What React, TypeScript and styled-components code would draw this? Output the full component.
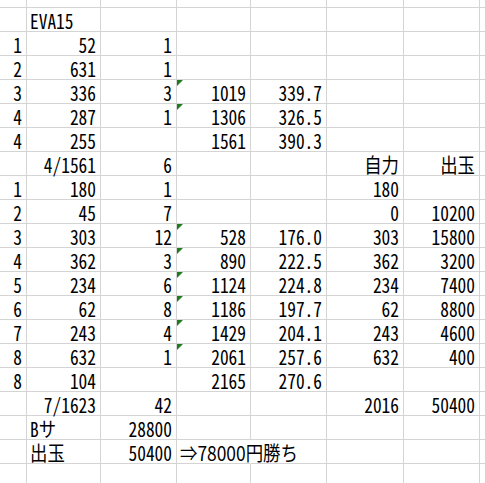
import React from 'react';
import styled, { createGlobalStyle } from 'styled-components';

const Global = createGlobalStyle`
  html, body { margin: 0; padding: 0; background: #fff; }
  body { overflow: hidden; }
`;

const Sheet = styled.div`
  display: grid;
  grid-template-columns: 27px 74px 76px 74px 76px 77px 76px 40px;
  grid-template-rows: 8px repeat(20, 24px);
  width: 485px;
  height: 483px;
  overflow: hidden;
  font-family: "Noto Sans CJK JP", sans-serif;
  font-size: 20px;
  color: #000;
  background: #fff;
`;

const Cell = styled.div<{ $left?: boolean; $join?: boolean }>`
  position: relative;
  display: flex;
  align-items: flex-end;
  justify-content: ${(p) => (p.$left ? 'flex-start' : 'flex-end')};
  padding: ${(p) => (p.$left ? '0 0 0 3px' : '0 4px 0 0')};
  border-right: 1px solid ${(p) => (p.$join ? '#fff' : '#d4d4d4')};
  border-bottom: 1px solid #d4d4d4;
  white-space: nowrap;
  line-height: 20px;
  min-width: 0;
`;

const Txt = styled.span<{ $left?: boolean; $prop?: boolean }>`
  display: inline-block;
  transform: scaleX(0.87);
  transform-origin: ${(p) => (p.$left ? 'left' : 'right')} bottom;
  font-feature-settings: ${(p) => (p.$prop ? 'normal' : '"hwid" 1')};
`;

const Flag = styled.span`
  position: absolute;
  top: 0;
  left: 0;
  width: 0;
  height: 0;
  border-top: 6px solid #1f7d1f;
  border-right: 6px solid transparent;
`;

type CellDef =
  | string
  | { v: string; left?: boolean; flag?: boolean; join?: boolean; prop?: boolean };

const F = (v: string): CellDef => ({ v, flag: true });
const L = (v: string): CellDef => ({ v, left: true });

const rows: CellDef[][] = [
  [],
  ['', L('EVA15')],
  ['1', '52', '1'],
  ['2', '631', '1'],
  ['3', '336', '3', F('1019'), '339.7'],
  ['4', '287', '1', F('1306'), '326.5'],
  ['4', '255', '', '1561', '390.3'],
  ['', '4/1561', '6', '', '', '自力', '出玉'],
  ['1', '180', '1', '', '', '180'],
  ['2', '45', '7', '', '', '0', '10200'],
  ['3', '303', '12', F('528'), '176.0', '303', '15800'],
  ['4', '362', '3', F('890'), '222.5', '362', '3200'],
  ['5', '234', '6', F('1124'), '224.8', '234', '7400'],
  ['6', '62', '8', F('1186'), '197.7', '62', '8800'],
  ['7', '243', '4', F('1429'), '204.1', '243', '4600'],
  ['8', '632', '1', F('2061'), '257.6', '632', '400'],
  ['8', '104', '', '2165', '270.6'],
  ['', '7/1623', '42', '', '', '2016', '50400'],
  ['', L('Bサ'), '28800'],
  ['', L('出玉'), '50400', { v: '⇒78000円勝ち', left: true, join: true, prop: true }],
  [],
];

const COLS = 8;

export default function App() {
  return (
    <>
      <Global />
      <Sheet>
        {rows.map((row, r) =>
          Array.from({ length: COLS }, (_, c) => {
            const raw = row[c] ?? '';
            const d = typeof raw === 'string' ? { v: raw } : raw;
            return (
              <Cell key={`${r}-${c}`} $left={d.left} $join={d.join}>
                {d.flag && <Flag />}
                {d.v && (
                  <Txt $left={d.left} $prop={d.prop}>
                    {d.v}
                  </Txt>
                )}
              </Cell>
            );
          })
        )}
      </Sheet>
    </>
  );
}
